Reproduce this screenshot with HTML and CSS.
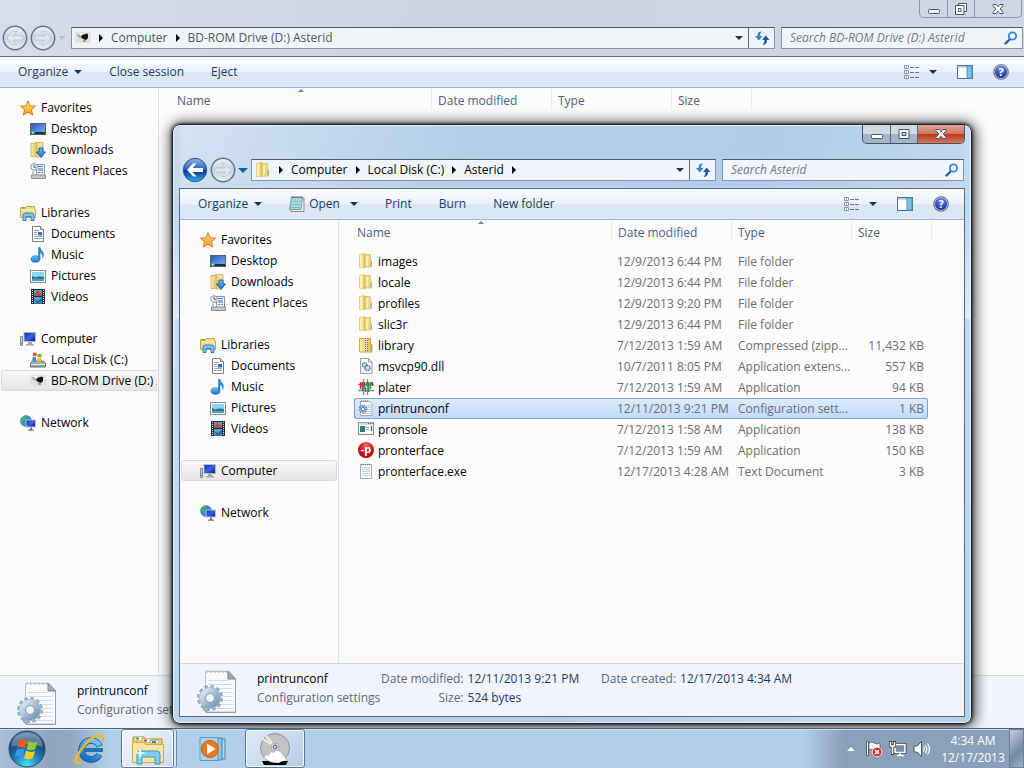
FILE: index.html
```
<!DOCTYPE html>
<html lang="en">

<head>
    <meta charset="UTF-8">
    <meta name="viewport" content="width=device-width, initial-scale=1.0">
    <title>Asterid</title>
    <link rel="stylesheet" href="styles.css">
</head>

<body>
    <!-- icons -->
    <svg class="sprite" width="0" height="0" aria-hidden="true">
        <defs>
            <linearGradient id="gFolder" x1="0" y1="0" x2="1" y2="0">
                <stop offset="0" stop-color="#fbeeb0" />
                <stop offset="1" stop-color="#dfb94c" />
            </linearGradient>
            <linearGradient id="gScreen" x1="0" y1="0" x2="1" y2="1">
                <stop offset="0" stop-color="#0a1fae" />
                <stop offset=".5" stop-color="#3a63e0" />
                <stop offset="1" stop-color="#06108a" />
            </linearGradient>
            <linearGradient id="gDesk" x1="0" y1="0" x2="1" y2="1">
                <stop offset="0" stop-color="#2858b8" />
                <stop offset="1" stop-color="#7db4f0" />
            </linearGradient>
            <linearGradient id="gStar" x1="0" y1="0" x2="0" y2="1">
                <stop offset="0" stop-color="#ffe27a" />
                <stop offset="1" stop-color="#f79a1c" />
            </linearGradient>
            <linearGradient id="gBlue" x1="0" y1="0" x2="0" y2="1">
                <stop offset="0" stop-color="#6cc4f5" />
                <stop offset="1" stop-color="#1673c4" />
            </linearGradient>
            <linearGradient id="gBack" x1="0" y1="0" x2="0" y2="1">
                <stop offset="0" stop-color="#8fb0e6" />
                <stop offset=".48" stop-color="#2a5fc0" />
                <stop offset=".52" stop-color="#0a2f92" />
                <stop offset="1" stop-color="#2fb4f2" />
            </linearGradient>
            <linearGradient id="gGlass" x1="0" y1="0" x2="0" y2="1">
                <stop offset="0" stop-color="#f0f5fa" stop-opacity=".9" />
                <stop offset=".5" stop-color="#c4d2e0" stop-opacity=".8" />
                <stop offset="1" stop-color="#e9f1f8" stop-opacity=".9" />
            </linearGradient>
            <radialGradient id="gOrb" cx=".5" cy=".95" r=".95">
                <stop offset="0" stop-color="#4fe0f5" />
                <stop offset=".4" stop-color="#1f7db4" />
                <stop offset=".75" stop-color="#17426f" />
                <stop offset="1" stop-color="#5c86ac" />
            </radialGradient>
            <linearGradient id="gGear" x1="0" y1="0" x2="1" y2="1">
                <stop offset="0" stop-color="#dfeaf3" />
                <stop offset="1" stop-color="#6d94b4" />
            </linearGradient>
        </defs>

        <symbol id="star" viewBox="0 0 16 16">
            <path d="M8 .8l2.100 5 5.400.4-4.100 3.500 1.300 5.400L8 12.200l-4.700 2.900L4.600 9.700.5 6.200l5.400-.4z" fill="url(#gStar)" stroke="#dc7a1e" stroke-width="1" stroke-linejoin="round" />
        </symbol>
        <symbol id="desktop" viewBox="0 0 16 16">
            <rect x=".5" y="2.500" width="15" height="11" fill="url(#gDesk)" stroke="#53616f" />
            <path d="M1 11h14v2H1z" fill="#1a2f4a" />
            <circle cx="3" cy="11.500" r="1.800" fill="#3db0e8" />
            <path d="M2 11h1.500v1.500H2z" fill="#e8d23a" />
        </symbol>
        <symbol id="downloads" viewBox="0 0 16 16">
            <path d="M1 1.500h6v13H1z" fill="url(#gFolder)" stroke="#d6b860" />
            <path d="M5 .5h8v13l-6 2V2z" fill="#f3e09a" stroke="#d6b860" />
            <path d="M9 6h4v4h2.500L11 15.500 6.500 10H9z" fill="url(#gBlue)" stroke="#1361a6" />
        </symbol>
        <symbol id="recent" viewBox="0 0 16 16">
            <path d="M6.500 1.500h8v11h-8z" fill="#eef3f8" stroke="#8b949d" />
            <path d="M8 5h5v3H8z" fill="#7fb6e6" />
            <path d="M8 3.500h5M8 9.500h2M11 9.500h2" stroke="#5a7fb0" />
            <circle cx="4" cy="4" r="3.300" fill="#f3f5f7" stroke="#8b949d" />
            <path d="M4 2v2.200h1.800" fill="none" stroke="#444" />
            <path d="M3 8.500v3M1.500 12h14v3.500h-14z" fill="#c3c7cb" stroke="#8b8f93" />
        </symbol>
        <symbol id="libraries" viewBox="0 0 16 16">
            <path d="M.5 2.500h5l1-1h8v3h1v8H.5z" fill="#f1dc8c" stroke="#c5a650" />
            <path d="M2 3h3" stroke="#4caf50" stroke-width="1.500" />
            <path d="M1 5h14" stroke="#fdf5cf" />
            <path d="M3 15.500v-5q0-2.500 2.500-2.500h6q2.500 0 2.500 2.500v5h-3v-4H6v4z" fill="#7cc6ee" stroke="#2d83b9" />
        </symbol>
        <symbol id="documents" viewBox="0 0 16 16">
            <path d="M2.500.5h8l3 3v12h-11z" fill="#fff" stroke="#7c8187" />
            <path d="M10.500.5v3h3" fill="#dde" stroke="#7c8187" />
            <path d="M4 4.500h5M4 6.500h3M4 8.500h3M4 10.500h8M4 12.500h8" stroke="#93a0b5" />
            <path d="M8 6h4v3.500H8z" fill="#2d6fc2" />
        </symbol>
        <symbol id="music" viewBox="0 0 16 16">
            <ellipse cx="5.500" cy="12" rx="4.500" ry="3.300" fill="url(#gBlue)" stroke="#1d6fae" stroke-width=".6" />
            <path d="M8.500 12V.5h1.600q.4 2.200 2.200 3.800 2.200 2.200.4 6.200Q13 6.500 10 5.600V12z" fill="#2e8fd6" stroke="#1c69a8" stroke-width=".5" />
        </symbol>
        <symbol id="pictures" viewBox="0 0 16 16">
            <rect x=".5" y="2.500" width="15" height="12" fill="#fff" stroke="#878c92" />
            <path d="M2 4h12v9H2z" fill="#8fd4f5" />
            <path d="M2 8l3 1.500 4-1 5 .5v2H2z" fill="#256f5b" />
            <path d="M2 10.500h12V13H2z" fill="#3f9fce" />
        </symbol>
        <symbol id="videos" viewBox="0 0 16 16">
            <path d="M1 0h14v15H1z" fill="#222c33" />
            <path d="M4 1h8v6H4zM4 8h8v6.500H4z" fill="#4fa3d8" />
            <path d="M5 4l3-3 2 3 2 1v2H4z" fill="#b4533a" />
            <path d="M4 10l4 2 4-3v3l-3 2H7z" fill="#2463a8" />
            <path d="M2.500 1v14M13.500 1v14" stroke="#dfe8ee" stroke-dasharray="1 1" />
        </symbol>
        <symbol id="computer" viewBox="0 0 16 16">
            <path d="M.5 5.500h2v9h-2z" fill="#ccd2d6" stroke="#818990" />
            <path d="M1 12h1v1H1z" fill="#3a3" />
            <rect x="4" y="1.500" width="11.500" height="9" fill="url(#gScreen)" stroke="#b5bcc4" />
            <path d="M8 11h4v2h2v1.500H6V13h2z" fill="#a3a9af" />
        </symbol>
        <symbol id="disk" viewBox="0 0 16 16">
            <path d="M2.500 9h11l2 2.500v3.500H.5v-3.500z" fill="#a2abb0" stroke="#656d73" />
            <path d="M1 12.500h14" stroke="#e1e5e8" />
            <path d="M11 13h3v1.500h-3z" fill="#45d045" />
            <path d="M3 1q2-1 3.500 0v3.500q-2-1-3.500 0z" fill="#e8542a" />
            <path d="M7.500 1.500q2 1 4 0V5q-2 1-4 0z" fill="#77b82c" />
            <path d="M2.500 5.500q2-1 3.500 0V9q-2-1-3.500 0z" fill="#2f86d8" />
            <path d="M7 6q2 1 4 0v3.500q-2 1-4 0z" fill="#f2bb1d" />
        </symbol>
        <symbol id="rom" viewBox="0 0 16 16">
            <path d="M0 2h16v11H0z" fill="#dce4e6" />
            <path d="M2 5q2-2 4-1v4q-3 0-4-3z" fill="#a4a9ab" />
            <path d="M7 5l5-1.500 1 1V8l-2 2-3-1-2-2z" fill="#111" />
            <path d="M3 3h4l-1 3z" fill="#fff" />
            <path d="M8 10h2.500l.5 2H8.500z" fill="#e0812e" />
        </symbol>
        <symbol id="network" viewBox="0 0 16 16">
            <circle cx="6" cy="6" r="5.500" fill="#2f8ad2" stroke="#4a7ea6" stroke-width=".6" />
            <path d="M2 2.500q2-2 5-1.500L5 4 3 7 1 6zM6 7l3 2-3 2.300z" fill="#4cb749" />
            <rect x="6" y="5" width="9.500" height="7" fill="url(#gScreen)" stroke="#bcc6ce" />
            <path d="M10 12.500h2v2h2v1.200H8v-1.200h2z" fill="#6b7780" />
        </symbol>
        <symbol id="folder" viewBox="0 0 16 16">
            <path d="M1.500 1.500l5-1v13.500l-5 .5z" fill="#f6e398" stroke="#e9d27c" />
            <path d="M6.500 1.500h6v6h1v6.500H8l-1.500 1z" fill="#efd888" stroke="#e0c56a" />
            <path d="M5.500.8h2v13l-2 1.700z" fill="#d9bd5e" />
            <path d="M3 2v12M9 3v10" stroke="#fdf4c4" stroke-width="1.500" />
            <path d="M13 9v4" stroke="#68a6cc" />
        </symbol>
        <symbol id="zip" viewBox="0 0 16 16">
            <path d="M1.500 1.500h11v6h1.500v7.500H1.500z" fill="url(#gFolder)" stroke="#cda944" />
            <path d="M8.500 1v13" stroke="#6b7180" stroke-width="3" stroke-dasharray="1 1" />
            <path d="M8.500 1v13" stroke="#d9dbe2" />
            <path d="M13 9v4" stroke="#68a6cc" />
        </symbol>
        <symbol id="dll" viewBox="0 0 16 16">
            <path d="M2.500.5h8l3.500 3.500v11.500H2.500z" fill="#fbfcfd" stroke="#9a9fa5" />
            <path d="M10.500.5V4H14" fill="none" stroke="#9a9fa5" />
            <circle cx="6.500" cy="7" r="2.200" fill="#dbe9f8" stroke="#35609f" stroke-dasharray="1.500 .6" stroke-width="1.300" />
            <circle cx="9.500" cy="10" r="2.500" fill="#dbe9f8" stroke="#35609f" stroke-dasharray="1.500 .6" stroke-width="1.300" />
        </symbol>
        <symbol id="plater" viewBox="0 0 16 16">
            <path d="M5.500 0v16M9.500 0v16M0 5.500h16M0 11.500h16" stroke="#8a8a8a" stroke-width="1.400" />
            <path d="M2.500 10V4h2v3h-2M6.500 3v5M12.500 4h2v3" fill="none" stroke="#cc2a2a" stroke-width="1.400" />
            <path d="M8.500 7V4h2v4M4.500 12V9h3v4M10.500 13V9h3M12.500 3v5" fill="none" stroke="#188a4a" stroke-width="1.400" />
        </symbol>
        <symbol id="conf" viewBox="0 0 16 16">
            <path d="M2.500 1.500h9l2.500 2v12H2.500z" fill="#f8f9fa" stroke="#a5aab0" />
            <path d="M3 1h8" stroke="#777" stroke-dasharray="1 1" />
            <path d="M8 5.500h5M8 7.500h5M8 9.500h5M8 11.500h5M5 13.500h8" stroke="#c1c9d3" />
            <circle cx="5" cy="9" r="3.300" fill="#dce8f0" stroke="#5f8cae" stroke-width="2" stroke-dasharray="1.500 .7" />
            <circle cx="5" cy="9" r="1.700" fill="#fff" stroke="#54799a" />
        </symbol>
        <symbol id="console" viewBox="0 0 16 16">
            <rect x=".5" y="1.500" width="15" height="12" fill="#f6f8f9" stroke="#878f95" />
            <path d="M1 2.500h14" stroke="#c5ced4" stroke-width="2" />
            <path d="M10 2.500h4.500" stroke="#5c6770" stroke-dasharray="1 1" />
            <path d="M2 5h5v6H2z" fill="#2f7c78" />
            <path d="M8 6.500h3M8 8.500h3" stroke="#a3abb0" />
            <path d="M13.500 5v5" stroke="#3b5d80" />
        </symbol>
        <symbol id="text" viewBox="0 0 16 16">
            <path d="M2.500 1.500h11v14h-11z" fill="#fafbfb" stroke="#a5aab0" />
            <path d="M3 1.500h10" stroke="#7b8085" stroke-width="1.500" stroke-dasharray="1 1" />
            <path d="M4 4.500h8M4 6.500h8M4 8.500h8M4 10.500h8M4 12.500h8" stroke="#c5cbd2" />
        </symbol>
        <symbol id="notepad" viewBox="0 0 16 16">
            <path d="M3 2h12v13.500H2z" fill="#f2eddc" stroke="#a08d62" />
            <path d="M2.500 1.500h11l-1.500 12H.5z" fill="#a6d8e2" stroke="#6ba3b2" />
            <path d="M2.500 1h11" stroke="#444f55" stroke-width="1.500" stroke-dasharray="1 1" />
            <path d="M3.500 5.500h8M3 8.500h8M2.500 11.500h8" stroke="#7fb9c8" />
        </symbol>
        <symbol id="bigconf" viewBox="0 0 48 48">
            <path d="M11.500 5.500h24l6 7.500v33h-30z" fill="#f9fafb" stroke="#b9bdc3" />
            <path d="M41.500 14v32.500H12" fill="none" stroke="#9a9fa6" />
            <path d="M34 5.500V13h7.500z" fill="#a9adb3" stroke="#7d8187" />
            <path d="M12 5.500h21" stroke="#c3c7cb" stroke-width="3" stroke-dasharray="1.500 2.500" />
            <path d="M14 14.500h20M14 18.500h25M14 22.500h25M14 26.500h25M14 30.500h25M14 34.500h25M14 38.500h25M14 42.500h25" stroke="#d3dbe6" />
            <circle cx="16" cy="32" r="11" fill="none" stroke="#8eabc2" stroke-width="4" stroke-dasharray="3.500 2.260" />
            <circle cx="16" cy="32" r="7.700" fill="none" stroke="url(#gGear)" stroke-width="6" />
            <circle cx="16" cy="32" r="10.500" fill="none" stroke="#a9c1d3" />
            <circle cx="16" cy="32" r="4.500" fill="#f3f6f9" stroke="#7795ad" />
            <circle cx="12" cy="43" r="2.500" fill="#9eb6c9" stroke="#7795ad" stroke-dasharray="2 1" />
        </symbol>

        <symbol id="magnifier" viewBox="0 0 14 14">
            <path d="M1.500 12.500L6 8" stroke="#2a5dac" stroke-width="2.400" stroke-linecap="round" />
            <circle cx="8.500" cy="5" r="3.700" fill="#f2f8fd" stroke="#3a86cc" stroke-width="1.800" />
        </symbol>
        <symbol id="refresh" viewBox="0 0 16 16">
            <path d="M7.500 1.500Q3.500 1 3.500 6H1l3.800 4.500L8.500 6H6q0-2.500 1.500-4.500z" fill="#2e86d2" />
            <path d="M8.500 15q4.500 0 4.500-5h2.500l-3.800-4.500L8 10h2.500q0 3-2 5z" fill="#2456a8" />
        </symbol>
        <symbol id="views" viewBox="0 0 16 14">
            <path d="M.5.5h4v3h-4zM.5 5.500h4v3h-4zM.5 10.500h4v3h-4z" fill="#fff" stroke="#8595a8" />
            <path d="M2 1.500h1v1H2zM2 11.500h1v1H2z" fill="#3b6ea8" />
            <path d="M2 6.500h1v1H2z" fill="#d33" />
            <path d="M6 2.500h10M6 7.500h10M6 12.500h10" stroke="#66788e" stroke-dasharray="4 1" />
        </symbol>
        <symbol id="pane" viewBox="0 0 16 14">
            <rect x=".5" y=".5" width="15" height="13" fill="#fff" stroke="#4c6c90" />
            <path d="M1 2h9" stroke="#b6c8da" stroke-width="1.500" />
            <path d="M10 1h5v12h-5z" fill="#78c3e2" stroke="#4f93b8" />
        </symbol>
        <symbol id="back" viewBox="0 0 26 26">
            <circle cx="13" cy="13" r="11.700" fill="url(#gBack)" stroke="#3b516f" />
            <path d="M11 6.500L5 13l6 6.500h3.500l-4-4.500H21v-4H10.500l4-4.500z" fill="#fff" />
        </symbol>
        <symbol id="back-off" viewBox="0 0 26 26">
            <circle cx="13" cy="13" r="11.700" fill="url(#gGlass)" stroke="#69747f" stroke-width="1.500" />
            <path d="M11 6.500L5 13l6 6.500h3.500l-4-4.500H21v-4H10.500l4-4.500z" fill="#e5ebf1" stroke="#b3c0cc" stroke-width=".7" />
        </symbol>
        <symbol id="forward" viewBox="0 0 26 26">
            <circle cx="13" cy="13" r="11.700" fill="url(#gGlass)" stroke="#69747f" stroke-width="1.500" />
            <path d="M15 6.500l6 6.500-6 6.500h-3.500l4-4.500H5v-4h10.500l-4-4.500z" fill="#dfe8f1" stroke="#b3c0cc" stroke-width=".7" />
        </symbol>
        <symbol id="minimize" viewBox="0 0 12 12">
            <rect x=".5" y="6.500" width="11" height="4" rx="1" fill="#fff" stroke="#4b5263" />
        </symbol>
        <symbol id="maximize" viewBox="0 0 12 12">
            <path d="M1 1.500h10v9H1zM4 4.500h4v3H4z" fill="#fff" fill-rule="evenodd" stroke="#4b5263" />
        </symbol>
        <symbol id="restore" viewBox="0 0 12 12">
            <path d="M3.500.5h8v8h-8z" fill="#fff" stroke="#4b5263" />
            <path d="M.5 2.500h8.500v9H.5zM3.500 5.500h2.500v3H3.500z" fill="#fff" fill-rule="evenodd" stroke="#4b5263" />
        </symbol>
        <symbol id="close" viewBox="0 0 12 12">
            <path d="M1 1.500h3.200L6 3.800l1.800-2.300H11v1.200L8.200 6 11 9.300v1.200H7.800L6 8.200l-1.800 2.300H1V9.300L3.800 6 1 2.700z" fill="#fff" stroke="#4b5263" />
        </symbol>

        <symbol id="orb" viewBox="0 0 38 38">
            <circle cx="19" cy="19" r="18" fill="url(#gOrb)" stroke="#2c4a68" />
            <path d="M3 17Q5 3 19 3t16 14Q19 11 3 17z" fill="#fff" opacity=".3" />
            <path d="M11 11q4-3 8-1l-2 8q-4-2-8 0z" fill="#ee5a24" />
            <path d="M20.500 11q4 2.500 9 .5l-2.200 7.500q-4 2.500-8.800 0z" fill="#8fca3a" />
            <path d="M8.500 20q4-2.500 8-.5l-2 7.500q-4-2-8 .5z" fill="#2f9be8" />
            <path d="M18 20.500q4.500 2.500 9 .5l-2.200 7q-4.300 2.500-8.800 0z" fill="#fccb2c" />
        </symbol>
        <symbol id="ie" viewBox="0 0 32 32">
            <circle cx="17" cy="17" r="9.500" fill="none" stroke="#14508f" stroke-width="6.500" stroke-dasharray="51 9" transform="rotate(28 17 17)" />
            <circle cx="17" cy="17" r="9.500" fill="none" stroke="url(#gBlue)" stroke-width="5" stroke-dasharray="50 10" transform="rotate(29 17 17)" />
            <path d="M10 17h19" stroke="#2271bb" stroke-width="4" />
            <path d="M28.500 9q2-6.500-3-6.500-6 0-13 7.500T1.500 26.500Q1.500 32 8 28.500" fill="none" stroke="#f4b921" stroke-width="2.400" />
        </symbol>
        <symbol id="explorer" viewBox="0 0 34 32">
            <path d="M2 4h11l2 2h16v23H2z" fill="#eccf74" stroke="#b18f3b" />
            <path d="M4 3.500h7v4H4zM12 5.500h7v4h-7zM20 7.500h7v3h-7z" fill="#fff" stroke="#b9a263" stroke-width=".6" />
            <path d="M5 4.500h3v2H5z" fill="#36a83d" />
            <path d="M13 6.500h3v2h-3z" fill="#d23c2c" />
            <path d="M21 8h4v2h-4z" fill="#2a83d0" />
            <path d="M1.500 9.500h11l2 2h18v18h-31z" fill="#f8e7a0" stroke="#cbaa4b" />
            <path d="M6 31V21q0-3 3-3h17q3 0 3 3v10h-5v-7H11v7z" fill="#7fd0ef" stroke="#3b94be" />
            <path d="M9 14l1 5 5 1-5 1-1 5-1-5-5-1 5-1z" fill="#fff" />
        </symbol>
        <symbol id="player" viewBox="0 0 30 28">
            <path d="M6 4h20v20H6z" fill="#b8d8ea" stroke="#4285ac" />
            <path d="M3 3h20v22H3z" fill="#8cc3e2" stroke="#4285ac" />
            <path d="M1 2.500h18v23H1z" fill="#a7d3ea" stroke="#5c9cc0" />
            <circle cx="11" cy="14" r="8.500" fill="#f2761c" stroke="#d45b0d" />
            <path d="M8 8.500l8.500 5.500L8 19.500z" fill="#fff" />
        </symbol>
        <symbol id="disc" viewBox="0 0 32 34">
            <path d="M3 29h26l-2 4H5z" fill="#000" />
            <circle cx="16" cy="16" r="14.500" fill="#c2c2c2" stroke="#777" stroke-width=".7" />
            <path d="M5 26l3-3 2 1 2-4 3 1 2-3 3 1 7 8q-3 3-6 3l-1 1-8-1z" fill="#fff" />
            <path d="M4 7l9 6M7 4l7 8" stroke="#efefef" stroke-width="2" />
            <circle cx="16" cy="15" r="4" fill="#e4e8ea" stroke="#a5a9ad" />
            <circle cx="16" cy="15" r="2" fill="#a8d0e8" stroke="#556" />
        </symbol>
        <symbol id="flag" viewBox="0 0 18 18">
            <path d="M1.500 1.500h2v14h-2z" fill="#fff" stroke="#445" stroke-width=".8" />
            <path d="M4 3q3-1.500 5 0t6 0v7q-3 1.500-6 0T4 10z" fill="#fff" stroke="#556" stroke-width=".8" />
            <circle cx="12" cy="12" r="4.800" fill="#d9261e" stroke="#fff" stroke-width=".8" />
            <path d="M10 10l4 4M14 10l-4 4" stroke="#fff" stroke-width="1.600" />
        </symbol>
        <symbol id="lan" viewBox="0 0 18 18">
            <path d="M6 4.500h10v8H6z" fill="#7c8ba0" stroke="#2f3946" stroke-width="3" />
            <path d="M6 4.500h10v8H6z" fill="#7c8ba0" stroke="#fff" stroke-width="1.500" />
            <path d="M8 15.500h7M11 13v2" stroke="#fff" stroke-width="1.500" />
            <path d="M1.500 1v5h4V1M3.500 6v9" fill="none" stroke="#2f3946" stroke-width="3" />
            <path d="M1.500 2v4h4V2M3.500 6v8" fill="none" stroke="#fff" stroke-width="1.500" />
        </symbol>
        <symbol id="volume" viewBox="0 0 18 18">
            <path d="M1 6h3l4.500-4.500v15L4 12H1z" fill="#fff" stroke="#3e4855" stroke-width=".9" />
            <path d="M10.500 6.500q1.500 2.500 0 5M12.500 5q2.500 4 0 8M14.500 3.500q4 5.500 0 11" fill="none" stroke="#fff" stroke-width="1.200" />
        </symbol>
    </svg>

    <main class="desktop">
        <!-- D: drive window -->
        <section class="window maximized" aria-label="BD-ROM Drive (D:) Asterid">
            <div class="titlebar">
                <div class="controls">
                    <button aria-label="Minimize"><svg width="12" height="12"><use href="#minimize" /></svg></button>
                    <button aria-label="Restore"><svg width="12" height="12"><use href="#restore" /></svg></button>
                    <button class="close" aria-label="Close"><svg width="12" height="12"><use href="#close" /></svg></button>
                </div>
            </div>
            <div class="navbar">
                <div class="history">
                    <button aria-label="Back"><svg width="26" height="26"><use href="#back-off" /></svg></button>
                    <button aria-label="Forward"><svg width="26" height="26"><use href="#forward" /></svg></button>
                    <button class="pages" aria-label="Recent pages"><i class="arrow-down hollow"></i></button>
                </div>
                <div class="address">
                    <svg width="16" height="16"><use href="#rom" /></svg>
                    <i class="arrow-right"></i>
                    <a href="#">Computer</a>
                    <i class="arrow-right"></i>
                    <a href="#">BD-ROM Drive (D:) Asterid</a>
                    <button class="drop" aria-label="Previous locations"><i class="arrow-down"></i></button>
                    <button class="refresh" aria-label="Refresh"><svg width="16" height="16"><use href="#refresh" /></svg></button>
                </div>
                <div class="search">
                    <input type="text" aria-label="Search" placeholder="Search BD-ROM Drive (D:) Asterid">
                    <svg width="14" height="14"><use href="#magnifier" /></svg>
                </div>
            </div>
            <div class="client">
                <div class="toolbar">
                    <button>Organize <i class="arrow-down"></i></button>
                    <button>Close session</button>
                    <button>Eject</button>
                    <div class="tools">
                        <button aria-label="Change your view"><svg width="16" height="14"><use href="#views" /></svg> <i class="arrow-down"></i></button>
                        <button aria-label="Preview pane"><svg width="16" height="14"><use href="#pane" /></svg></button>
                        <button class="help" aria-label="Help">?</button>
                    </div>
                </div>
                <div class="content">
                    <nav class="sidebar">
                        <ul>
                            <li><a href="#"><svg width="16" height="16"><use href="#star" /></svg>Favorites</a></li>
                            <li class="sub"><a href="#"><svg width="16" height="16"><use href="#desktop" /></svg>Desktop</a></li>
                            <li class="sub"><a href="#"><svg width="16" height="16"><use href="#downloads" /></svg>Downloads</a></li>
                            <li class="sub"><a href="#"><svg width="16" height="16"><use href="#recent" /></svg>Recent Places</a></li>
                        </ul>
                        <ul>
                            <li><a href="#"><svg width="16" height="16"><use href="#libraries" /></svg>Libraries</a></li>
                            <li class="sub"><a href="#"><svg width="16" height="16"><use href="#documents" /></svg>Documents</a></li>
                            <li class="sub"><a href="#"><svg width="16" height="16"><use href="#music" /></svg>Music</a></li>
                            <li class="sub"><a href="#"><svg width="16" height="16"><use href="#pictures" /></svg>Pictures</a></li>
                            <li class="sub"><a href="#"><svg width="16" height="16"><use href="#videos" /></svg>Videos</a></li>
                        </ul>
                        <ul>
                            <li><a href="#"><svg width="16" height="16"><use href="#computer" /></svg>Computer</a></li>
                            <li class="sub"><a href="#"><svg width="16" height="16"><use href="#disk" /></svg>Local Disk (C:)</a></li>
                            <li class="sub current cut"><a href="#"><svg width="16" height="16"><use href="#rom" /></svg>BD-ROM Drive (D:) Asterid</a></li>
                        </ul>
                        <ul>
                            <li><a href="#"><svg width="16" height="16"><use href="#network" /></svg>Network</a></li>
                        </ul>
                    </nav>
                    <div class="files">
                        <table>
                            <thead>
                                <tr>
                                    <th class="name">Name</th>
                                    <th class="date">Date modified</th>
                                    <th class="type">Type</th>
                                    <th class="size">Size</th>
                                </tr>
                            </thead>
                        </table>
                    </div>
                </div>
                <div class="details">
                    <svg width="48" height="48"><use href="#bigconf" /></svg>
                    <div class="summary">
                        <p class="title">printrunconf</p>
                        <p>Configuration settings</p>
                    </div>
                </div>
            </div>
        </section>

        <!-- Asterid folder window -->
        <section class="window floating" aria-label="Asterid">
            <div class="titlebar">
                <div class="controls">
                    <button aria-label="Minimize"><svg width="12" height="12"><use href="#minimize" /></svg></button>
                    <button aria-label="Maximize"><svg width="12" height="12"><use href="#maximize" /></svg></button>
                    <button class="close" aria-label="Close"><svg width="12" height="12"><use href="#close" /></svg></button>
                </div>
            </div>
            <div class="navbar">
                <div class="history">
                    <button aria-label="Back"><svg width="26" height="26"><use href="#back" /></svg></button>
                    <button aria-label="Forward"><svg width="26" height="26"><use href="#forward" /></svg></button>
                    <button class="pages" aria-label="Recent pages"><i class="arrow-down blue"></i></button>
                </div>
                <div class="address">
                    <svg width="16" height="16"><use href="#folder" /></svg>
                    <i class="arrow-right"></i>
                    <a href="#">Computer</a>
                    <i class="arrow-right"></i>
                    <a href="#">Local Disk (C:)</a>
                    <i class="arrow-right"></i>
                    <a href="#">Asterid</a>
                    <i class="arrow-right"></i>
                    <button class="drop" aria-label="Previous locations"><i class="arrow-down"></i></button>
                    <button class="refresh" aria-label="Refresh"><svg width="16" height="16"><use href="#refresh" /></svg></button>
                </div>
                <div class="search">
                    <input type="text" aria-label="Search" placeholder="Search Asterid">
                    <svg width="14" height="14"><use href="#magnifier" /></svg>
                </div>
            </div>
            <div class="client">
                <div class="toolbar">
                    <button>Organize <i class="arrow-down"></i></button>
                    <button class="open"><svg width="16" height="16"><use href="#notepad" /></svg>Open <i class="arrow-down"></i></button>
                    <button>Print</button>
                    <button>Burn</button>
                    <button>New folder</button>
                    <div class="tools">
                        <button aria-label="Change your view"><svg width="16" height="14"><use href="#views" /></svg> <i class="arrow-down"></i></button>
                        <button aria-label="Preview pane"><svg width="16" height="14"><use href="#pane" /></svg></button>
                        <button class="help" aria-label="Help">?</button>
                    </div>
                </div>
                <div class="content">
                    <nav class="sidebar">
                        <ul>
                            <li><a href="#"><svg width="16" height="16"><use href="#star" /></svg>Favorites</a></li>
                            <li class="sub"><a href="#"><svg width="16" height="16"><use href="#desktop" /></svg>Desktop</a></li>
                            <li class="sub"><a href="#"><svg width="16" height="16"><use href="#downloads" /></svg>Downloads</a></li>
                            <li class="sub"><a href="#"><svg width="16" height="16"><use href="#recent" /></svg>Recent Places</a></li>
                        </ul>
                        <ul>
                            <li><a href="#"><svg width="16" height="16"><use href="#libraries" /></svg>Libraries</a></li>
                            <li class="sub"><a href="#"><svg width="16" height="16"><use href="#documents" /></svg>Documents</a></li>
                            <li class="sub"><a href="#"><svg width="16" height="16"><use href="#music" /></svg>Music</a></li>
                            <li class="sub"><a href="#"><svg width="16" height="16"><use href="#pictures" /></svg>Pictures</a></li>
                            <li class="sub"><a href="#"><svg width="16" height="16"><use href="#videos" /></svg>Videos</a></li>
                        </ul>
                        <ul>
                            <li class="current"><a href="#"><svg width="16" height="16"><use href="#computer" /></svg>Computer</a></li>
                        </ul>
                        <ul>
                            <li><a href="#"><svg width="16" height="16"><use href="#network" /></svg>Network</a></li>
                        </ul>
                    </nav>
                    <div class="files">
                        <table>
                            <thead>
                                <tr>
                                    <th class="name">Name</th>
                                    <th class="date">Date modified</th>
                                    <th class="type">Type</th>
                                    <th class="size">Size</th>
                                </tr>
                            </thead>
                            <tbody>
                                <tr>
                                    <td><svg width="16" height="16"><use href="#folder" /></svg>images</td>
                                    <td>12/9/2013 6:44 PM</td>
                                    <td>File folder</td>
                                    <td></td>
                                </tr>
                                <tr>
                                    <td><svg width="16" height="16"><use href="#folder" /></svg>locale</td>
                                    <td>12/9/2013 6:44 PM</td>
                                    <td>File folder</td>
                                    <td></td>
                                </tr>
                                <tr>
                                    <td><svg width="16" height="16"><use href="#folder" /></svg>profiles</td>
                                    <td>12/9/2013 9:20 PM</td>
                                    <td>File folder</td>
                                    <td></td>
                                </tr>
                                <tr>
                                    <td><svg width="16" height="16"><use href="#folder" /></svg>slic3r</td>
                                    <td>12/9/2013 6:44 PM</td>
                                    <td>File folder</td>
                                    <td></td>
                                </tr>
                                <tr>
                                    <td><svg width="16" height="16"><use href="#zip" /></svg>library</td>
                                    <td>7/12/2013 1:59 AM</td>
                                    <td>Compressed (zipp...</td>
                                    <td>11,432 KB</td>
                                </tr>
                                <tr>
                                    <td><svg width="16" height="16"><use href="#dll" /></svg>msvcp90.dll</td>
                                    <td>10/7/2011 8:05 PM</td>
                                    <td>Application extens...</td>
                                    <td>557 KB</td>
                                </tr>
                                <tr>
                                    <td><svg width="16" height="16"><use href="#plater" /></svg>plater</td>
                                    <td>7/12/2013 1:59 AM</td>
                                    <td>Application</td>
                                    <td>94 KB</td>
                                </tr>
                                <tr class="selected">
                                    <td><svg width="16" height="16"><use href="#conf" /></svg>printrunconf</td>
                                    <td>12/11/2013 9:21 PM</td>
                                    <td>Configuration sett...</td>
                                    <td>1 KB</td>
                                </tr>
                                <tr>
                                    <td><svg width="16" height="16"><use href="#console" /></svg>pronsole</td>
                                    <td>7/12/2013 1:58 AM</td>
                                    <td>Application</td>
                                    <td>138 KB</td>
                                </tr>
                                <tr>
                                    <td><span class="badge">-p</span>pronterface</td>
                                    <td>7/12/2013 1:59 AM</td>
                                    <td>Application</td>
                                    <td>150 KB</td>
                                </tr>
                                <tr>
                                    <td><svg width="16" height="16"><use href="#text" /></svg>pronterface.exe</td>
                                    <td>12/17/2013 4:28 AM</td>
                                    <td>Text Document</td>
                                    <td>3 KB</td>
                                </tr>
                            </tbody>
                        </table>
                    </div>
                </div>
                <div class="details">
                    <svg width="48" height="48"><use href="#bigconf" /></svg>
                    <div class="summary">
                        <p class="title">printrunconf</p>
                        <p>Configuration settings</p>
                    </div>
                    <dl class="modified">
                        <dt>Date modified:</dt>
                        <dd>12/11/2013 9:21 PM</dd>
                        <dt>Size:</dt>
                        <dd>524 bytes</dd>
                    </dl>
                    <dl>
                        <dt>Date created:</dt>
                        <dd>12/17/2013 4:34 AM</dd>
                    </dl>
                </div>
            </div>
        </section>
    </main>

    <footer class="taskbar">
        <button class="start" aria-label="Start"><svg width="38" height="38"><use href="#orb" /></svg></button>
        <button class="task" aria-label="Internet Explorer"><svg width="32" height="32"><use href="#ie" /></svg></button>
        <button class="task active stacked" aria-label="Windows Explorer"><svg width="34" height="32"><use href="#explorer" /></svg></button>
        <button class="task" aria-label="Media Player"><svg width="30" height="28"><use href="#player" /></svg></button>
        <button class="task active running" aria-label="Disc"><svg width="32" height="34"><use href="#disc" /></svg></button>
        <div class="tray">
            <button class="more" aria-label="Show hidden icons"><i class="arrow-up"></i></button>
            <button aria-label="Action Center"><svg width="18" height="18"><use href="#flag" /></svg></button>
            <button aria-label="Network"><svg width="18" height="18"><use href="#lan" /></svg></button>
            <button aria-label="Volume"><svg width="18" height="18"><use href="#volume" /></svg></button>
            <button class="clock">4:34 AM<br>12/17/2013</button>
        </div>
        <button class="show-desktop" aria-label="Show desktop"></button>
    </footer>
</body>

</html>
```
FILE: styles.css
```
* {
    margin: 0;
    padding: 0;
    box-sizing: border-box;
}

body {
    display: flex;
    flex-direction: column;
    height: 100vh;
    overflow: hidden;
    font-family: "Open Sans", "Noto Sans", sans-serif;
    font-size: 12px;
    line-height: 18px;
    color: #000;
    background-color: #b2cfea;
}

svg {
    display: block;
    flex: none;
}

.sprite {
    position: absolute;
}

button {
    display: flex;
    align-items: center;
    border: none;
    background: none;
    font: inherit;
    color: inherit;
    white-space: nowrap;
}

a {
    color: inherit;
    text-decoration: none;
    white-space: nowrap;
}

ul {
    list-style: none;
}

/* arrows */
.arrow-down,
.arrow-up,
.arrow-right {
    display: block;
    flex: none;
    border: 4px solid transparent;
}

.arrow-down {
    border-top-color: #1c3257;
    border-bottom: none;
}

.arrow-down.blue {
    border-top-color: #1d5b9c;
    border-width: 5px 5px 0;
}

.arrow-down.hollow {
    border-top-color: #b4bfca;
}

.arrow-up {
    border-bottom-color: #fff;
    border-top: none;
}

.arrow-right {
    border-left-color: #000;
    border-right: none;
}

/* windows */
.desktop {
    position: relative;
    flex: 1;
    display: flex;
    min-height: 0;
}

.window {
    display: flex;
    flex-direction: column;
    min-width: 0;
}

.maximized {
    flex: 1;
    background: linear-gradient(100deg, #d5dde8 0%, #cbd5e1 40%, #cfd9e4 100%);
}

.floating {
    position: absolute;
    top: 124px;
    right: 52px;
    bottom: 4px;
    left: 172px;
    padding: 0 6px 6px;
    border: 1px solid #1d2127;
    border-radius: 8px;
    background:
        linear-gradient(#c9dcf0 0, #c2d8ee 90px, #e2edf8 194px, transparent 194px) left / 7px 100% no-repeat,
        linear-gradient(#c9dcf0 0, #c2d8ee 90px, #e2edf8 194px, transparent 194px) right / 7px 100% no-repeat,
        linear-gradient(110deg, #d3e2f2 0, #b2cfea 30%, #b0cdea 60%, #c6daf0 85%, #b4d0eb 100%);
    box-shadow: inset 0 0 0 1px #e6f2fc, 0 0 3px 1px rgba(0, 0, 0, .6), 1px 1px 14px 2px rgba(0, 0, 0, .75);
}

.titlebar {
    display: flex;
    justify-content: flex-end;
    flex: none;
    height: 27px;
}

.floating .titlebar {
    height: 34px;
}

.controls {
    display: flex;
    height: 18px;
    margin-right: 2px;
    border: 1px solid #8b95a3;
    border-top: none;
    border-radius: 0 0 5px 5px;
    overflow: hidden;
}

.floating .controls {
    height: 19px;
    margin-right: 0;
    border-color: #49535f;
    background: linear-gradient(#cfdae5 50%, #a3b5c9 50%);
}

.controls button {
    justify-content: center;
    width: 28px;
    border-right: 1px solid #8b95a3;
}

.controls button:nth-child(2) {
    width: 27px;
}

.floating .controls button {
    border-color: #5d6875;
}

.controls .close {
    width: 46px;
    border-right: none;
}

.floating .controls .close {
    background: linear-gradient(#dea898 0, #cf7460 48%, #b93a22 52%, #d2765c 100%);
}

.navbar {
    display: flex;
    flex: none;
    height: 29px;
    padding: 0 1px 7px 2px;
}

.floating .navbar {
    padding-left: 3px;
}

.history {
    display: flex;
    align-items: center;
    gap: 2px;
    width: 69px;
    height: 22px;
}

.address,
.search {
    display: flex;
    align-items: center;
    height: 22px;
    border: 1px solid #8595a7;
    border-top-color: #4d5a69;
    background-color: #f0f4f8;
}

.floating .address,
.floating .search {
    background-color: #f0f5fb;
}

.address {
    flex: 1;
    gap: 8px;
    min-width: 0;
    padding-left: 3px;
    color: #4d565f;
}

.floating .address {
    color: #000;
}

.address .drop {
    margin-left: auto;
}

.refresh {
    justify-content: center;
    width: 26px;
    height: 20px;
    margin-left: -3px;
    border-left: 1px solid #5b6877;
}

.search {
    width: 242px;
    margin-left: 6px;
    padding: 0 4px 0 8px;
}

.search input {
    flex: 1;
    min-width: 0;
    border: none;
    outline: none;
    background: none;
    font: inherit;
    font-style: italic;
}

.search input::placeholder {
    color: #75797e;
}

.client {
    display: flex;
    flex-direction: column;
    flex: 1;
    min-height: 0;
    border-top: 1px solid #5f6c7b;
    background-color: #fcfcfc;
}

.floating .client {
    border: 1px solid #56697f;
}

.toolbar {
    display: flex;
    align-items: center;
    flex: none;
    gap: 27px;
    height: 31px;
    padding: 0 15px 0 18px;
    border-bottom: 1px solid #9fb0cc;
    background: linear-gradient(#fbfdff 0, #eaf2fb 48%, #dce6f4 52%, #dce7f5 100%);
    color: #1e395b;
}

.toolbar button {
    gap: 6px;
}

.toolbar .open {
    gap: 4px;
}

.open .arrow-down {
    margin-left: 6px;
}

.tools {
    display: flex;
    align-items: center;
    gap: 20px;
    margin-left: auto;
}

.tools button:first-child {
    gap: 9px;
}

.toolbar .help {
    justify-content: center;
    width: 16px;
    height: 16px;
    border: 1px solid #85888e;
    border-radius: 50%;
    background: radial-gradient(circle at 50% 30%, #6d92f0, #0b1f96 80%);
    box-shadow: inset 0 0 0 1px #c0c5d0;
    color: #fff;
    font-size: 11px;
    font-weight: bold;
    line-height: 14px;
}

.content {
    display: flex;
    flex: 1;
    min-height: 0;
}

/* left pane */
.sidebar {
    flex: none;
    width: 159px;
    padding-top: 9px;
    border-right: 1px solid #d6e5f5;
    overflow: hidden;
}

.sidebar ul {
    margin-bottom: 21px;
}

.sidebar a {
    display: flex;
    align-items: center;
    gap: 5px;
    height: 21px;
    margin: 0 1px;
    padding-left: 18px;
    border: 1px solid transparent;
}

.sidebar .sub a {
    padding-left: 28px;
}

.sidebar .current a {
    border-color: #d9d9d9;
    border-radius: 3px;
    background: linear-gradient(#f8f8f8, #e5e5e5);
}

.sidebar .cut a {
    border-right: none;
    border-radius: 3px 0 0 3px;
    overflow: hidden;
}

/* file list */
.files {
    flex: 1;
    min-width: 0;
    padding-left: 15px;
}

table {
    width: 574px;
    table-layout: fixed;
    border-collapse: separate;
    border-spacing: 0;
}

th {
    position: relative;
    height: 31px;
    padding: 4px 0 0 7px;
    vertical-align: top;
    text-align: left;
    font-weight: normal;
    color: #4c607a;
    background: linear-gradient(#e9f1fa, #dbe7f4 60%, transparent) left top / 1px 24px no-repeat;
}

th.name {
    width: 257px;
    padding-left: 3px;
    background: none;
}

th.date,
th.type {
    width: 120px;
}

/* sort mark */
th.name::before {
    content: "";
    position: absolute;
    top: 1px;
    left: 50%;
    margin-left: -5px;
    border: 3px solid transparent;
    border-top: none;
    border-bottom-color: #4f8db0;
}

th.size::after {
    content: "";
    position: absolute;
    top: 0;
    right: -4px;
    width: 1px;
    height: 24px;
    background: linear-gradient(#e9f1fa, #dbe7f4 60%, transparent);
}

td {
    height: 21px;
    padding-left: 6px;
    border: 0 solid #7da2ce;
    line-height: 19px;
    white-space: nowrap;
    color: #6d6d6d;
}

td:first-child {
    padding-left: 4px;
    color: #000;
}

td:nth-child(3) {
    padding-left: 7px;
}

td:last-child {
    padding: 0 4px 0 0;
    text-align: right;
}

td svg,
.badge {
    float: left;
    margin: 1px 4px 0 0;
}

.badge {
    width: 16px;
    height: 16px;
    border-radius: 50%;
    background: radial-gradient(circle at 50% 20%, #ee6a6c, #d4070f 50%, #a8060c);
    color: #fff;
    font-size: 11px;
    font-weight: bold;
    line-height: 14px;
    text-align: center;
}

.selected td {
    border-width: 1px 0;
    background: linear-gradient(#dcebfc, #c1dbfc);
}

.selected td:first-child {
    padding-left: 3px;
    border-left-width: 1px;
    border-radius: 3px 0 0 3px;
}

.selected td:last-child {
    padding-right: 3px;
    border-right-width: 1px;
    border-radius: 0 3px 3px 0;
}

/* details pane */
.details {
    display: flex;
    flex: none;
    height: 53px;
    padding: 5px 0 0 14px;
    border-top: 1px solid #ccd9ea;
    background-color: #f1f5fb;
    color: #5a6779;
    line-height: 19px;
    white-space: nowrap;
}

.details svg {
    margin-top: -3px;
}

.summary {
    width: 124px;
    margin-left: 15px;
}

.title {
    color: #000;
}

.details dl {
    display: grid;
    grid-template-columns: auto 1fr;
    align-content: start;
    column-gap: 4px;
}

.details dt {
    text-align: right;
}

.details dd {
    color: #1e395b;
}

.details .modified {
    width: 220px;
}

/* taskbar */
.taskbar {
    position: relative;
    display: flex;
    align-items: center;
    flex: none;
    height: 40px;
    border-top: 1px solid #4f6274;
    background: linear-gradient(90deg, #a9bfd6 0, #8fa6c0 50px, #90a7c1 70px, #b2cfea 110px, #b2cfea calc(100% - 220px), #8a9fb8 calc(100% - 180px), #8a9fb8 100%);
    box-shadow: inset 0 1px 0 #cde0f2;
}

.start {
    margin-left: 8px;
}

.task {
    justify-content: center;
    width: 60px;
    height: 39px;
    margin-left: 2px;
}

.start + .task {
    margin-left: 14px;
}

.task.active {
    border: 1px solid #5b7692;
    border-radius: 3px;
    background: linear-gradient(135deg, #f3f8fd, #cadcf0);
    box-shadow: inset 0 0 0 1px #f3f8fd;
}

.task.stacked {
    width: 53px;
    margin-left: 1px;
    margin-right: 8px;
    box-shadow: inset 0 0 0 1px #fff, 2px 0 0 #dbe8f5, 3px 0 0 #6d88a4;
}

.task.running {
    margin-left: 1px;
    background: linear-gradient(135deg, #dfeaf6, #b5cde6);
}

.tray {
    display: flex;
    align-items: center;
    gap: 6px;
    margin-left: auto;
    color: #fff;
}

.tray .more {
    margin-right: 4px;
}

.clock {
    justify-content: center;
    width: 72px;
    line-height: 17px;
    text-align: center;
}

.show-desktop {
    width: 15px;
    height: 39px;
    border: 1px solid #6b7f95;
    background: linear-gradient(135deg, #c1d0e0, #7389a3 60%, #9db2c8);
}
```
